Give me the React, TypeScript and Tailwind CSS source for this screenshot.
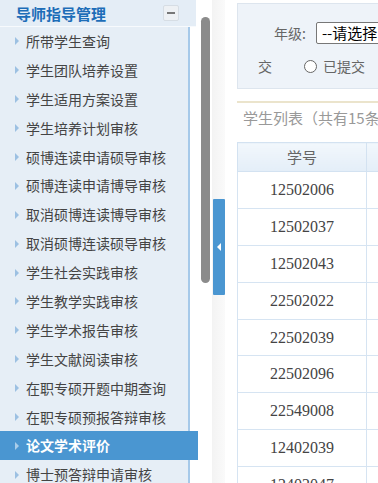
import React from 'react';

const menu = [
  '所带学生查询',
  '学生团队培养设置',
  '学生适用方案设置',
  '学生培养计划审核',
  '硕博连读申请硕导审核',
  '硕博连读申请博导审核',
  '取消硕博连读博导审核',
  '取消硕博连读硕导审核',
  '学生社会实践审核',
  '学生教学实践审核',
  '学生学术报告审核',
  '学生文献阅读审核',
  '在职专硕开题中期查询',
  '在职专硕预报答辩审核',
  '论文学术评价',
  '博士预答辩申请审核',
];

const students = [
  '12502006',
  '12502037',
  '12502043',
  '22502022',
  '22502039',
  '22502096',
  '22549008',
  '12402039',
  '12402047',
];

const sans = { fontFamily: '"Noto Sans CJK SC", "Noto Sans", sans-serif' };

const App: React.FC = () => {
  const active = '论文学术评价';

  return (
    <div className="flex h-[483px] w-[378px] overflow-hidden bg-white" style={sans}>
      {/* sidebar */}
      <div className="flex w-[198px] shrink-0 flex-col">
        <div className="flex h-[27px] w-[196px] shrink-0 items-center justify-between border-b border-[#f7fafd] bg-[#e4edf6] pl-[16px] pr-[17px]">
          <span className="text-[15px] font-bold leading-none text-[#1d6db8]">导师指导管理</span>
          <span className="flex h-[16px] w-[16px] items-center justify-center rounded-[2px] border border-[#d6dde4] bg-[#eef1f4]">
            <span className="h-[2px] w-[8px] bg-[#777]" />
          </span>
        </div>
        <div className="w-[190px] flex-1 border-r-2 border-[#a6c9e9] bg-[#e6eef6]">
          {menu.map((m) => {
            const on = m === active;
            return (
              <div
                key={m}
                className={
                  on
                    ? 'flex h-[28.9px] w-[198px] items-center bg-[#4a96d1] pl-[15px]'
                    : 'flex h-[28.9px] items-center pl-[15px]'
                }
              >
                <span
                  className={
                    on
                      ? 'mr-[7px] h-0 w-0 border-y-[4px] border-l-[4px] border-y-transparent border-l-[#a9cdea]'
                      : 'mr-[7px] h-0 w-0 border-y-[4px] border-l-[4px] border-y-transparent border-l-[#9cc0e2]'
                  }
                />
                <span
                  className={
                    on
                      ? 'whitespace-nowrap text-[14px] font-bold text-white'
                      : 'whitespace-nowrap text-[14px] text-[#444]'
                  }
                >
                  {m}
                </span>
              </div>
            );
          })}
        </div>
      </div>

      {/* scrollbar */}
      <div className="w-[14px] shrink-0 pl-[3px] pt-[17px]">
        <div className="h-[266px] w-[9px] rounded-full bg-[#8b8b8b]" />
      </div>

      {/* splitter */}
      <div className="w-[13px] shrink-0 bg-gradient-to-r from-[#f3f3f3] to-[#fafafa] pl-px pt-[199px]">
        <div className="flex h-[96px] w-[12px] items-center justify-center rounded-[1px] bg-[#4a96d1]">
          <span className="h-0 w-0 border-y-[4px] border-r-[4px] border-y-transparent border-r-white" />
        </div>
      </div>

      {/* content */}
      <div className="min-w-0 flex-1 pl-[12px] pt-[3px]">
        <div className="h-[86px] w-[260px] border border-[#dde5ee] bg-[#eef3f9] pt-[18px]">
          <div className="flex h-[22px] items-center pl-[36px]">
            <span className="text-[14px] text-[#666]">年级:</span>
            <span className="ml-[10px] flex h-[22px] w-[130px] shrink-0 items-center rounded-[2px] border border-[#777] bg-white pl-[5px] text-[15px] whitespace-nowrap text-black">
              --请选择
            </span>
          </div>
          <div className="mt-[13px] flex h-[18px] items-center pl-[20px]">
            <span className="text-[14px] text-[#666]">交</span>
            <span className="ml-[32px] h-[13px] w-[13px] rounded-full border-[1.5px] border-[#666] bg-white" />
            <span className="ml-[6px] text-[14px] text-[#666]">已提交</span>
          </div>
        </div>
        <div className="mt-[12px] h-[2px] w-[260px] bg-[#ebe4cc]" />
        <div className="mt-[5px] h-[20px] whitespace-nowrap pl-[6px] text-[15px] leading-[20px] text-[#999]">
          学生列表（共有15条记录）
        </div>
        <table className="mt-[14px] w-[260px] table-fixed border-collapse">
          <thead>
            <tr className="h-[29px]">
              <th className="w-[129px] border border-[#d3e2f1] bg-gradient-to-b from-[#f2f7fc] to-[#e4eef8] text-[15px] font-normal text-[#666]">
                学号
              </th>
              <th className="border border-[#d3e2f1] bg-gradient-to-b from-[#f2f7fc] to-[#e4eef8]" />
            </tr>
          </thead>
          <tbody>
            {students.map((s) => (
              <tr key={s} className="h-[36.9px]">
                <td
                  className="border border-[#d6e4f2] text-center text-[16px] text-[#444]"
                  style={{ fontFamily: '"Liberation Serif", serif' }}
                >
                  {s}
                </td>
                <td className="border border-[#d6e4f2]" />
              </tr>
            ))}
          </tbody>
        </table>
      </div>
    </div>
  );
};

export default App;
